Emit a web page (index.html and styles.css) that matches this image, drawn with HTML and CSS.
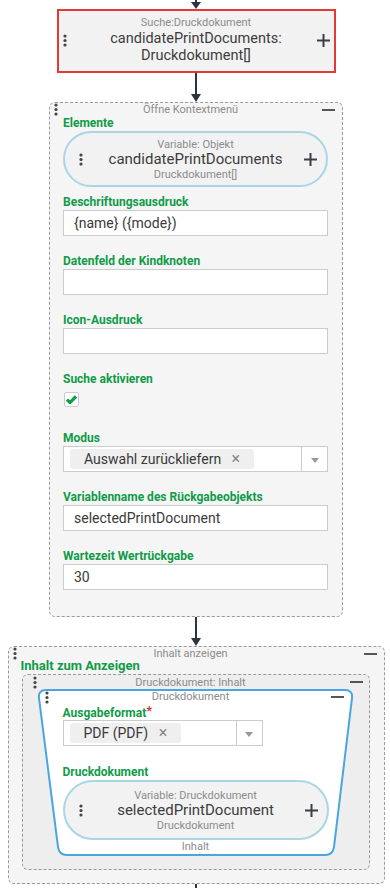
FILE: index.html
```html
<!DOCTYPE html>
<html lang="de">
<head>
    <meta charset="UTF-8">
    <meta name="viewport" content="width=device-width, initial-scale=1.0">
    <title>Kontextmenü – Druckdokument</title>
    <link rel="stylesheet" href="styles.css">
</head>
<body>
    <div class="flow">
        <div class="arrow arrow-top"><span class="arrow-line"></span><span class="arrow-head"></span></div>

        <!-- Suche-Knoten (ausgewählt) -->
        <div class="search-node">
            <svg class="dots" width="4" height="13" viewBox="0 0 4 13"><circle cx="2" cy="2" r="1.6"/><circle cx="2" cy="6.5" r="1.6"/><circle cx="2" cy="11" r="1.6"/></svg>
            <div class="node-text">
                <div class="caption">Suche:Druckdokument</div>
                <div class="node-name">candidatePrintDocuments:</div>
                <div class="node-name">Druckdokument[]</div>
            </div>
            <svg class="plus" width="13" height="13" viewBox="0 0 13 13"><path d="M6.5 0v13M0 6.5h13"/></svg>
        </div>

        <div class="arrow"><span class="arrow-line"></span><span class="arrow-head"></span></div>

        <!-- Öffne Kontextmenü -->
        <div class="group group-menu">
            <div class="group-head">
                <svg class="dots" width="4" height="13" viewBox="0 0 4 13"><circle cx="2" cy="2" r="1.6"/><circle cx="2" cy="6.5" r="1.6"/><circle cx="2" cy="11" r="1.6"/></svg>
                <span class="caption">Öffne Kontextmenü</span>
                <span class="minus"></span>
            </div>
            <div class="group-body">
                <div class="label">Elemente</div>
                <div class="pill pill-objects">
                    <svg class="dots" width="4" height="13" viewBox="0 0 4 13"><circle cx="2" cy="2" r="1.6"/><circle cx="2" cy="6.5" r="1.6"/><circle cx="2" cy="11" r="1.6"/></svg>
                    <div class="pill-text">
                        <div class="caption">Variable: Objekt</div>
                        <div class="pill-name">candidatePrintDocuments</div>
                        <div class="caption">Druckdokument[]</div>
                    </div>
                    <svg class="plus" width="13" height="13" viewBox="0 0 13 13"><path d="M6.5 0v13M0 6.5h13"/></svg>
                </div>

                <div class="field field-first">
                    <div class="label">Beschriftungsausdruck</div>
                    <input class="text-input" type="text" value="{name} ({mode})">
                </div>
                <div class="field">
                    <div class="label">Datenfeld der Kindknoten</div>
                    <input class="text-input" type="text" value="">
                </div>
                <div class="field">
                    <div class="label">Icon-Ausdruck</div>
                    <input class="text-input" type="text" value="">
                </div>
                <div class="field">
                    <div class="label">Suche aktivieren</div>
                    <span class="checkbox">
                        <svg width="11" height="9" viewBox="0 0 11 9"><path d="M1 4.6l3 3L10 1.4"/></svg>
                    </span>
                </div>
                <div class="field field-after-check">
                    <div class="label">Modus</div>
                    <div class="select">
                        <div class="select-value"><span class="tag">Auswahl zurückliefern <span class="tag-x">×</span></span></div>
                        <div class="select-arrow"><span></span></div>
                    </div>
                </div>
                <div class="field">
                    <div class="label">Variablenname des Rückgabeobjekts</div>
                    <input class="text-input" type="text" value="selectedPrintDocument">
                </div>
                <div class="field">
                    <div class="label">Wartezeit Wertrückgabe</div>
                    <input class="text-input" type="text" value="30">
                </div>
            </div>
        </div>

        <div class="arrow"><span class="arrow-line"></span><span class="arrow-head"></span></div>

        <!-- Inhalt anzeigen -->
        <div class="group group-content">
            <div class="group-head">
                <svg class="dots" width="4" height="13" viewBox="0 0 4 13"><circle cx="2" cy="2" r="1.6"/><circle cx="2" cy="6.5" r="1.6"/><circle cx="2" cy="11" r="1.6"/></svg>
                <span class="caption">Inhalt anzeigen</span>
                <span class="minus"></span>
            </div>
            <div class="group-body">
                <div class="label label-big">Inhalt zum Anzeigen</div>

                <div class="group group-inner">
                    <div class="group-head">
                        <svg class="dots" width="4" height="13" viewBox="0 0 4 13"><circle cx="2" cy="2" r="1.6"/><circle cx="2" cy="6.5" r="1.6"/><circle cx="2" cy="11" r="1.6"/></svg>
                        <span class="caption">Druckdokument: Inhalt</span>
                        <span class="minus"></span>
                    </div>
                    <div class="group-body">
                        <div class="trap">
                            <svg class="trap-shape" viewBox="0 0 317 165" preserveAspectRatio="none">
                                <path d="M9 1H308Q316 1 315 9L297 156Q296 164 288 164H30Q22 164 21 156L2 9Q1 1 9 1Z"/>
                            </svg>
                            <div class="trap-head">
                                <svg class="dots" width="4" height="13" viewBox="0 0 4 13"><circle cx="2" cy="2" r="1.6"/><circle cx="2" cy="6.5" r="1.6"/><circle cx="2" cy="11" r="1.6"/></svg>
                                <span class="caption">Druckdokument</span>
                                <span class="minus"></span>
                            </div>
                            <div class="trap-body">
                                <div class="label">Ausgabeformat<span class="req">*</span></div>
                                <div class="select select-small">
                                    <div class="select-value"><span class="tag">PDF (PDF) <span class="tag-x">×</span></span></div>
                                    <div class="select-arrow"><span></span></div>
                                </div>
                                <div class="field field-doc">
                                    <div class="label">Druckdokument</div>
                                    <div class="pill pill-doc">
                                        <svg class="dots" width="4" height="13" viewBox="0 0 4 13"><circle cx="2" cy="2" r="1.6"/><circle cx="2" cy="6.5" r="1.6"/><circle cx="2" cy="11" r="1.6"/></svg>
                                        <div class="pill-text">
                                            <div class="caption">Variable: Druckdokument</div>
                                            <div class="pill-name">selectedPrintDocument</div>
                                            <div class="caption">Druckdokument</div>
                                        </div>
                                        <svg class="plus" width="13" height="13" viewBox="0 0 13 13"><path d="M6.5 0v13M0 6.5h13"/></svg>
                                    </div>
                                </div>
                                <div class="caption trap-foot">Inhalt</div>
                            </div>
                        </div>
                    </div>
                </div>
            </div>
        </div>

        <div class="arrow arrow-bottom"><span class="arrow-line"></span></div>
    </div>
</body>
</html>
```

FILE: styles.css
```css
body {
    font-family: Roboto, "Noto Sans", Arial, sans-serif;
    margin: 0;
    padding: 0;
    background-color: #ffffff;
    color: #3a3a3a;
    overflow: hidden;
}

.flow {
    display: flex;
    flex-direction: column;
    align-items: center;
    padding-left: 2px;
}

/* Verbindungspfeile */
.arrow {
    display: flex;
    flex-direction: column;
    align-items: center;
}

.arrow-line {
    width: 2px;
    height: 21px;
    background-color: #2d3440;
}

.arrow-head {
    width: 0;
    height: 0;
    border-left: 5px solid transparent;
    border-right: 5px solid transparent;
    border-top: 8px solid #2d3440;
}

.arrow-top .arrow-line {
    height: 2px;
}

.arrow-top .arrow-head {
    border-top-width: 7px;
}

.arrow-bottom .arrow-line {
    height: 8px;
}

/* Icons */
.dots {
    fill: #444;
    display: block;
}

.plus {
    display: block;
    stroke: #3a3f47;
    stroke-width: 2;
    justify-self: end;
}

.minus {
    display: block;
    width: 13px;
    height: 2px;
    background-color: #555;
    justify-self: end;
}

.caption {
    font-size: 11px;
    line-height: 14px;
    color: #8c8c8c;
    text-align: center;
}

/* Suche-Knoten */
.search-node {
    width: 279px;
    box-sizing: border-box;
    border: 2px solid #e53935;
    background-color: #f2f2f2;
    padding: 5px 4px 7px 4px;
    display: grid;
    grid-template-columns: 20px 1fr 20px;
    align-items: center;
}

.node-text {
    text-align: center;
}

.node-name {
    font-size: 14.5px;
    line-height: 17px;
    height: 17px;
    color: #3d3d3d;
}

/* Gruppen (gestrichelt) */
.group {
    box-sizing: border-box;
    border: 1px dashed #9a9a9a;
    border-radius: 6px;
    background-color: #f5f5f5;
}

.group-head {
    display: grid;
    grid-template-columns: 14px 1fr 22px;
    align-items: center;
    height: 13px;
    padding: 0 7px 0 4px;
}

.group-head .caption {
    line-height: 13px;
}

.group-menu {
    width: 294px;
}

.group-menu .group-body {
    padding: 0 14px 26px 13px;
}

.group-content {
    width: 377px;
}

.group-content > .group-head {
    height: 12px;
}

.group-content > .group-body {
    padding: 0 14px 13px 12px;
}

.group-inner {
    margin-top: 1px;
    margin-left: 1px;
    background-color: #eeeeee;
}

.group-inner > .group-head {
    height: 14px;
    grid-template-columns: 14px 1fr 28px;
    padding: 0 6px 0 10px;
}

.group-inner > .group-body {
    padding: 0 15px 13px 14px;
}

/* Felder */
.label {
    font-size: 12px;
    line-height: 14px;
    font-weight: bold;
    color: #0f9b48;
}

.label-big {
    font-size: 13px;
}

.req {
    color: #d32f2f;
    font-size: 13px;
    vertical-align: 2px;
}

.field {
    margin-top: 18px;
}

.field-first {
    margin-top: 8px;
}

.field-after-check {
    margin-top: 24px;
}

.field .label {
    margin-bottom: 1px;
}

.text-input {
    display: block;
    width: 100%;
    height: 26px;
    box-sizing: border-box;
    border: 1px solid #cccccc;
    background-color: #ffffff;
    padding: 0 10px;
    font: inherit;
    font-size: 14px;
    color: #3a3a3a;
    margin: 0;
    outline: none;
}

.checkbox {
    display: flex;
    align-items: center;
    justify-content: center;
    width: 15px;
    height: 15px;
    margin-top: 6px;
    margin-left: 1px;
    box-sizing: border-box;
    border: 1px solid #cccccc;
    border-radius: 2px;
    background-color: #ffffff;
}

.checkbox svg {
    fill: none;
    stroke: #0f9b48;
    stroke-width: 3.2;
}

.select {
    display: flex;
    height: 26px;
    box-sizing: border-box;
    border: 1px solid #cccccc;
    background-color: #ffffff;
}

.select-small {
    width: 200px;
}

.select-value {
    flex: 1;
    display: flex;
    align-items: center;
    padding-left: 6px;
}

.tag {
    display: inline-block;
    height: 20px;
    line-height: 20px;
    padding: 0 14px;
    border-radius: 3px;
    background-color: #efefef;
    font-size: 14px;
    color: #3a3a3a;
    white-space: nowrap;
}

.tag-x {
    margin-left: 7px;
    color: #888;
    font-size: 16px;
}

.select-arrow {
    width: 25px;
    border-left: 1px solid #cccccc;
    display: flex;
    align-items: center;
    justify-content: center;
}

.select-arrow span {
    width: 0;
    height: 0;
    margin-top: 2px;
    border-left: 4px solid transparent;
    border-right: 4px solid transparent;
    border-top: 5px solid #999999;
}

/* Variablen-Pillen */
.pill {
    margin-top: 1px;
    box-sizing: border-box;
    border: 2px solid #a9d6e5;
    border-radius: 30px;
    background-color: #f2f2f2;
    display: grid;
    grid-template-columns: 20px 1fr 20px;
    align-items: center;
    padding: 0 9px;
}

.pill .dots {
    margin-left: 5px;
}

.pill-objects {
    height: 56px;
}

.pill-doc {
    height: 60px;
}

.pill-text {
    text-align: center;
}

.pill-name {
    font-size: 15px;
    line-height: 15px;
    color: #3d3d3d;
}

.pill-text .caption {
    line-height: 15px;
}

/* Trapez */
.trap {
    position: relative;
    padding: 1px 0 2px 0;
}

.trap-shape {
    position: absolute;
    left: 0;
    top: 0;
    width: 100%;
    height: 100%;
    z-index: 0;
}

.trap-shape path {
    fill: #ffffff;
    stroke: #4aa6e0;
    stroke-width: 2;
    vector-effect: non-scaling-stroke;
}

.trap-head,
.trap-body {
    position: relative;
    z-index: 1;
}

.trap-head {
    display: grid;
    grid-template-columns: 14px 1fr 21px;
    align-items: center;
    height: 14px;
    padding: 0 10px 0 8px;
}

.trap-body {
    padding: 0 25px 0 26px;
}

.field-doc {
    margin-top: 19px;
}

.trap-foot {
    line-height: 14px;
}
```
